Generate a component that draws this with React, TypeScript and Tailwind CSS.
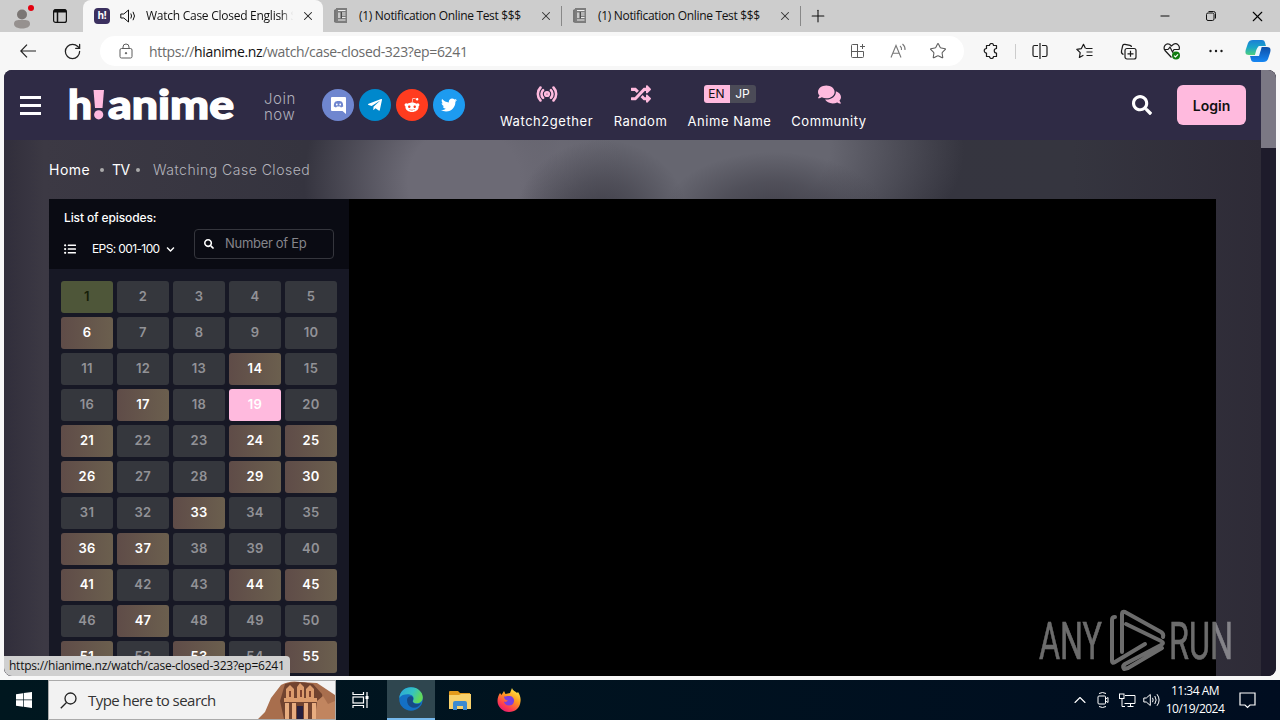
import type { ReactNode } from "react";
import { ChevronUp, Minus, Plus, Radio, RotateCw, Star, Volume2, X } from "lucide-react";
import {
  FaChevronDown,
  FaComments,
  FaListUl,
  FaRandom,
  FaRedditAlien,
  FaSearch,
  FaTelegramPlane,
  FaTwitter,
} from "react-icons/fa";
import { clsx } from "clsx";

const FILLERS = [6, 14, 17, 21, 24, 25, 26, 29, 30, 33, 36, 37, 41, 44, 45, 47, 51, 53, 55];
const WATCHED = 1;
const CURRENT = 19;
const episodes = Array.from({ length: 55 }, (_, i) => i + 1);

function NewspaperIcon() {
  return (
    <svg width="16" height="18" viewBox="0 0 16 18" className="shrink-0">
      <path d="M1 3l2-1v14l-2-1z" fill="#777" />
      <rect x="3" y="1" width="11" height="15" fill="#7d7d7d" />
      <path d="M5 3.500h7.500M9 6h3.500M9 8h3.500M9 10.500h3.500M5 13h7.500" stroke="#ededed" strokeWidth="1.200" />
      <path d="M5 5.500h2.500v5.500H5z" fill="#c9c9c9" />
      <path d="M8.300 5v6.500" stroke="#333" strokeWidth=".8" />
    </svg>
  );
}

function BackgroundTab() {
  return (
    <div className="flex h-8 w-[239px] items-center pl-[10px]">
      <NewspaperIcon />
      <span className="ml-[10px] w-[172px] whitespace-nowrap text-[12px] tracking-[-0.32px] text-[#111]">
        (1) Notification Online Test $$$
      </span>
      <span className="ml-[9px] flex w-3 justify-center">
        <X size={14} strokeWidth={1.8} className="shrink-0 text-[#333]" />
      </span>
      <span className="ml-[9px] h-5 w-px bg-[#888]" />
    </div>
  );
}

function TabStrip() {
  return (
    <div className="flex h-8 shrink-0 bg-[#cdcdcd]">
      <div className="flex w-[83px] items-center pl-3">
        <svg width="22" height="26" viewBox="0 0 22 26" className="shrink-0">
          <circle cx="10" cy="11.500" r="5" fill="#7b7674" />
          <path d="M2 21c0-4 3-4 8-4s8 0 8 4c0 3-4 4.500-8 4.500S2 24 2 21z" fill="#96918f" />
          <circle cx="19" cy="5" r="3" fill="#e3000f" />
        </svg>
        <svg width="14" height="14" viewBox="0 0 14 14" fill="none" stroke="#111" className="ml-[19px] shrink-0">
          <rect x=".6" y=".6" width="12.800" height="12.800" rx="2" strokeWidth="1.200" />
          <path d="M1 2.800h12M4.500 3v10.500" strokeWidth="1.500" />
          <path d="M1 1.600h12" strokeWidth="2" />
        </svg>
      </div>
      <div className="flex w-[240px] items-center rounded-t-lg bg-[#f7f7f7] pl-[11px]">
        <span className="flex h-4 w-4 shrink-0 items-center justify-center rounded bg-[#3b305f] pb-px text-[10px] font-bold tracking-[-0.3px] text-white">
          h!
        </span>
        <svg width="17" height="14" viewBox="0 0 17 14" fill="none" stroke="#111" className="ml-[10px] shrink-0">
          <path d="M.8 5v4h3l4.700 4V1L3.800 5z" strokeLinejoin="round" />
          <path d="M10.800 4.500q1.500 2.500 0 5M13 2.800q3 4.200 0 8.400" />
        </svg>
        <span className="ml-[9px] w-[147px] overflow-hidden bg-gradient-to-r from-[#111] from-[92%] to-transparent bg-clip-text whitespace-nowrap text-[12px] tracking-[-0.26px] text-transparent">
          Watch Case Closed English S
        </span>
        <X size={14} strokeWidth={1.8} className="ml-[8px] shrink-0 text-[#222]" />
      </div>
      <BackgroundTab />
      <BackgroundTab />
      <Plus size={20} strokeWidth={1.3} className="ml-[7px] self-center text-[#111]" />
      <div className="ml-auto flex">
        <span className="flex w-[46px] items-center justify-center">
          <Minus size={14} strokeWidth={1.6} />
        </span>
        <span className="flex w-[46px] items-center justify-center">
          <svg width="10" height="10" viewBox="0 0 10 10" fill="none" stroke="#111">
            <rect x=".5" y="2" width="7.500" height="7.500" rx="1.500" />
            <path d="M2.500.5H7.500q2 0 2 2V7.500" />
          </svg>
        </span>
        <span className="flex w-[46px] items-center justify-center">
          <X size={17} strokeWidth={1.5} />
        </span>
      </div>
    </div>
  );
}

function ToolButton({ children }: { children: ReactNode }) {
  return <span className="flex w-11 items-center justify-center text-[#1b1b1b]">{children}</span>;
}

function CopilotIcon() {
  return (
    <svg width="26" height="24" viewBox="0 0 26 24">
      <defs>
        <linearGradient id="cpA" x1="0" y1="0" x2="0" y2="1">
          <stop offset="0" stopColor="#1b7fd6" />
          <stop offset=".5" stopColor="#1aa5c8" />
          <stop offset="1" stopColor="#4fd07e" />
        </linearGradient>
        <linearGradient id="cpB" x1="0" y1="0" x2="0" y2="1">
          <stop offset="0" stopColor="#0f4fa8" />
          <stop offset="1" stopColor="#1687f3" />
        </linearGradient>
      </defs>
      <path d="M8 1h9c3 0 3 3 4 6h-6c-2 0-3 2-4 5l-1 4H4c-4 0-4-3-3-6l2-6c1-2 2-3 5-3z" fill="url(#cpA)" />
      <path d="M18 23H9c-3 0-3-3-4-6h6c2 0 3-2 4-5l1-4h6c4 0 4 3 3 6l-2 6c-1 2-2 3-5 3z" fill="url(#cpB)" />
      <path d="M14 7h3l-3 10h-4z" fill="#eaf7ff" />
    </svg>
  );
}

function Toolbar() {
  return (
    <div className="flex h-[38px] shrink-0 items-center bg-[#f7f7f7]">
      <svg width="16" height="14" viewBox="0 0 16 14" fill="none" stroke="#222" strokeWidth="1.200" className="ml-5">
        <path d="M7 .7L.8 7 7 13.300M1 7h15" />
      </svg>
      <RotateCw size={19} strokeWidth={1.6} className="ml-[27px] text-[#222]" />
      <div className="ml-[18px] flex h-[30px] w-[864px] items-center rounded-full bg-white pl-[18px] text-[#5d5d5d]">
        <svg width="16" height="16" viewBox="0 0 16 16" fill="none" stroke="currentColor">
          <rect x="2" y="5.500" width="12" height="9.500" rx="1.500" />
          <path d="M5 5.500V4q0-3 3-3t3 3v1.500" />
          <circle cx="8" cy="10.200" r=".7" fill="currentColor" />
        </svg>
        <span className="ml-[15px] whitespace-nowrap text-[14px] tracking-[-0.34px] text-[#6b6b6b]">
          https://<span className="text-[#111]">hianime.nz</span>/watch/case-closed-323?ep=6241
        </span>
        <div className="ml-auto flex w-[126px] items-center">
          <span className="flex w-10 justify-center">
            <svg width="16" height="16" viewBox="0 0 16 16" fill="none" stroke="currentColor">
              <path d="M8 1.500H2.500q-1 0-1 1v11q0 1 1 1h10q1 0 1-1V8.500h-12M7.500 1.500v13M12.500 1v5M10 3.500h5" />
            </svg>
          </span>
          <span className="flex w-10 items-start justify-center text-[#777]">
            <svg width="17" height="16" viewBox="0 0 17 16" fill="none" stroke="currentColor" strokeWidth="1.100">
              <path d="M1 14.500L6 2.500l5 12M3 10.300h6.300M10 3q2 1.500 1.500 4M12.500 1q3 2.500 2.500 6" />
            </svg>
          </span>
          <span className="flex w-10 justify-center">
            <Star size={18} strokeWidth={1.4} />
          </span>
        </div>
      </div>
      <div className="ml-[5px] flex h-9 items-center">
        <ToolButton>
          <svg width="16" height="16" viewBox="0 0 16 16" fill="none" stroke="currentColor" strokeWidth="1.200" strokeLinejoin="round">
            <path d="M3.500 2.500H6.500a2 2 0 0 1 4 0H13.500V5.500a2 2 0 0 0 0 4.500V13.500H10.500a2 2 0 0 1-4 0H3.500V10a2 2 0 0 1 0-4.500z" />
          </svg>
        </ToolButton>
        <span className="mx-[2px] h-[15px] w-px bg-[#ccc]" />
        <ToolButton>
          <svg width="16" height="16" viewBox="0 0 16 16" fill="none" stroke="currentColor" strokeWidth="1.200">
            <path d="M6 2.500H2.500q-1.500 0-1.500 1.500v8q0 1.500 1.500 1.500H6M10 2.500h3.500q1.500 0 1.500 1.500v8q0 1.500-1.500 1.500H10M8 0v16" />
          </svg>
        </ToolButton>
        <ToolButton>
          <svg width="17" height="16" viewBox="0 0 17 16" fill="none" stroke="currentColor" strokeWidth="1.200" strokeLinejoin="round">
            <path d="M9.500 5.500L7.500 1.300 5.400 5.600.8 6.300l3.400 3.300-.8 4.900 4-2.200M10 5.500h6.500M10.500 9h6M10.500 12.500h6" />
          </svg>
        </ToolButton>
        <ToolButton>
          <svg width="17" height="17" viewBox="0 0 17 17" fill="none" stroke="currentColor" strokeWidth="1.200">
            <path d="M3.500 11.500q-2.500-1-2-3.500L2.600 3Q3 1 5 1.400l5 1q1.500.4 1.500 1.600" />
            <rect x="5" y="5.500" width="11" height="10.500" rx="2" />
            <path d="M10.500 7.800v6M7.500 10.800h6" />
          </svg>
        </ToolButton>
        <ToolButton>
          <svg width="18" height="18" viewBox="0 0 18 18" fill="none" stroke="currentColor" strokeWidth="1.200">
            <path d="M8.500 15.500L2 8.500C-.5 5 3 .500 6.500 2.200L8.500 4l2-1.800C14 .5 17.500 4 16 7.500M1 7.500h4L7 5l2.500 5L11 7.500h5.500" />
            <circle cx="13" cy="13.500" r="4" fill="#107c10" stroke="none" />
            <path d="M11 13.600l1.500 1.400 2.500-2.700" stroke="#fff" />
          </svg>
        </ToolButton>
        <ToolButton>
          <svg width="14" height="4" viewBox="0 0 14 4" fill="currentColor">
            <circle cx="1.500" cy="2" r="1.200" />
            <circle cx="7" cy="2" r="1.200" />
            <circle cx="12.500" cy="2" r="1.200" />
          </svg>
        </ToolButton>
        <span className="flex w-[39px] justify-center">
          <CopilotIcon />
        </span>
      </div>
    </div>
  );
}

function DiscordIcon() {
  return (
    <svg width="15" height="17" viewBox="0 0 15 17">
      <path d="M1 0h13q1 0 1 1v16l-3.500-3H1q-1 0-1-1V1q0-1 1-1z" fill="#fff" />
      <path d="M2.800 9.500q0-4 1.700-5l2-.5h2l2 .5q1.700 1 1.700 5L10 10.500l-1-1H6l-1 1z" fill="#6f86cf" />
      <circle cx="5.800" cy="7.500" r=".9" fill="#fff" />
      <circle cx="9.200" cy="7.500" r=".9" fill="#fff" />
    </svg>
  );
}

function SiteLogo() {
  return (
    <svg
      width="170"
      height="44"
      viewBox="0 -4 170 44"
      className="ml-[26px] shrink-0"
      fontFamily="Lato"
      fontWeight="900"
      fontSize="40"
      stroke="#fff"
      strokeWidth="1.400"
    >
      <text x="1" y="32" fill="#fff" textLength="24" lengthAdjust="spacingAndGlyphs">h</text>
      <g fill="#ffbade" stroke="none">
        <path d="M26.500 3h10.500l-1.500 18h-7.500z" />
        <circle cx="31.700" cy="27.800" r="4.600" />
      </g>
      <text x="41" y="32" fill="#fff" textLength="126" lengthAdjust="spacingAndGlyphs">anime</text>
    </svg>
  );
}

const socials = [
  { key: "discord", bg: "bg-[#6f86cf]", icon: <DiscordIcon /> },
  { key: "telegram", bg: "bg-[#0088cc]", icon: <FaTelegramPlane size={16} /> },
  { key: "reddit", bg: "bg-[#ff3c1f]", icon: <FaRedditAlien size={16} /> },
  { key: "twitter", bg: "bg-[#1d9bf0]", icon: <FaTwitter size={16} /> },
];

function NavItem({ label, width, children }: { label: string; width: string; children: ReactNode }) {
  return (
    <div className={clsx("flex shrink-0 flex-col items-center", width)}>
      <div className="flex h-5 items-center text-[#ffbade]">{children}</div>
      <span className="mt-[7px] whitespace-nowrap text-[13px] leading-5 tracking-[0.55px] text-white">{label}</span>
    </div>
  );
}

function SiteHeader() {
  return (
    <header className="flex h-[70px] shrink-0 items-center bg-[#2f2b45] pl-4 font-[Inter,sans-serif]">
      <div className="flex w-[21px] shrink-0 flex-col gap-[5px]">
        <span className="h-[3px] bg-white" />
        <span className="h-[3px] bg-white" />
        <span className="h-[3px] bg-white" />
      </div>
      <SiteLogo />
      <span className="ml-[27px] w-[58px] pt-[3px] text-[15px] leading-4 font-light tracking-[0.5px] text-[#b0afbb]">
        Join
        <br />
        now
      </span>
      <div className="flex gap-[5px]">
        {socials.map((s) => (
          <span key={s.key} className={clsx("flex h-8 w-8 items-center justify-center rounded-full text-white", s.bg)}>
            {s.icon}
          </span>
        ))}
      </div>
      <nav className="ml-[35px] flex gap-5 pt-[5px]">
        <NavItem label="Watch2gether" width="w-[93px]">
          <Radio size={22} strokeWidth={2.8} />
        </NavItem>
        <NavItem label="Random" width="w-[55px]">
          <FaRandom size={20} />
        </NavItem>
        <NavItem label="Anime Name" width="w-[83px]">
          <span className="flex h-[18px] overflow-hidden rounded-[3px] text-[12px] leading-[18px]">
            <span className="w-[26px] bg-[#ffbade] text-center text-[#111]">EN</span>
            <span className="w-[26px] bg-[#4b4b57] text-center text-white">JP</span>
          </span>
        </NavItem>
        <NavItem label="Community" width="w-[76px]">
          <FaComments size={23} />
        </NavItem>
      </nav>
      <FaSearch size={20} className="ml-auto text-white" />
      <span className="mr-[15px] ml-[25px] flex h-10 w-[69px] items-center justify-center rounded-md bg-[#ffbade] pt-px text-[14px] font-semibold text-[#111]">
        Login
      </span>
    </header>
  );
}

function Breadcrumb() {
  return (
    <div className="flex h-[59px] shrink-0 items-center pl-[45px] text-[14px] tracking-[0.5px] whitespace-nowrap text-white">
      <span className="w-[51px]">Home</span>
      <span className="h-1 w-1 rounded-full bg-[#aaa]" />
      <span className="ml-[8px] w-[24px] tracking-[-0.5px]">TV</span>
      <span className="h-1 w-1 rounded-full bg-[#aaa]" />
      <span className="ml-[13px] font-light text-[#b4b4bc]">Watching Case Closed</span>
    </div>
  );
}

function EpisodeCell({ number }: { number: number }) {
  const filler = FILLERS.includes(number);
  return (
    <span
      className={clsx(
        "flex h-8 items-center justify-center rounded-[3px] text-[13px] font-semibold tracking-[0.3px]",
        number === WATCHED && "bg-[#4e5639] text-[#172008]",
        number === CURRENT && "bg-[#ffbade] text-white",
        filler && "bg-gradient-to-r from-[#5f4c48] to-[#6b5f4e] text-white",
        number !== WATCHED && number !== CURRENT && !filler && "bg-[#35373d] text-[#929297]"
      )}
    >
      {number}
    </span>
  );
}

function EpisodeList() {
  return (
    <aside className="flex w-[300px] shrink-0 flex-col overflow-hidden bg-[#171825]">
      <div className="flex h-[70px] shrink-0 justify-between bg-[#0a0b13] pr-[15px] pl-[15px] text-[12px] text-white">
        <div className="pt-[10px]">
          <div className="leading-[18px] font-medium tracking-[-0.12px] whitespace-nowrap">List of episodes:</div>
          <div className="mt-[13px] flex items-center whitespace-nowrap leading-[18px]">
            <FaListUl size={12} />
            <span className="ml-4 w-[68px] tracking-[-0.62px]">EPS: 001-100</span>
            <FaChevronDown size={9} className="ml-[6px]" />
          </div>
        </div>
        <div className="mt-[30px] flex h-[30px] w-[140px] items-center rounded border border-[#35363d] pl-[9px]">
          <FaSearch size={10} />
          <span className="ml-[11px] text-[13px] tracking-[-0.3px] text-[#85858b]">Number of Ep</span>
        </div>
      </div>
      <div className="grid grid-cols-5 gap-1 p-3">
        {episodes.map((n) => (
          <EpisodeCell key={n} number={n} />
        ))}
      </div>
    </aside>
  );
}

function Watermark() {
  return (
    <svg
      width="194"
      height="64"
      viewBox="0 0 194 64"
      className="absolute right-[44px] bottom-[3px] opacity-50"
      fontFamily="Roboto"
      fontSize="51"
      fill="#d8d8d8"
    >
      <g stroke="#d8d8d8" strokeWidth=".6">
        <text x="1" y="50" textLength="63" lengthAdjust="spacingAndGlyphs">ANY</text>
        <text x="131" y="50" textLength="64" lengthAdjust="spacingAndGlyphs">RUN</text>
      </g>
      <g fill="none" stroke="#d8d8d8" strokeWidth="4" strokeLinejoin="round" strokeLinecap="round">
        <path d="M84 43V5q0-3 3-2l36 20q3 2 2 5" />
        <path d="M77 8q-3 0-3 3v41q0 3 3 1l30-18" />
        <path d="M88 15l35 17q4 2 0 4L87 55q-3 2-1 5l4-1 34-20" />
      </g>
    </svg>
  );
}

function SitePage() {
  return (
    <div className="relative mx-1 flex h-[606px] shrink-0 overflow-hidden rounded-lg bg-[#1e1b2b] font-[Inter,sans-serif]">
      <div className="flex w-[1257px] flex-col">
        <SiteHeader />
        <main className="flex min-h-0 flex-1 flex-col bg-[#35343f] bg-[radial-gradient(ellipse_85px_75px_at_598px_75px,#403f49_0%,#403f4999_45%,transparent_100%),radial-gradient(ellipse_110px_60px_at_770px_72px,#42414b_0%,#42414b99_50%,transparent_100%),radial-gradient(ellipse_160px_150px_at_460px_40px,#6c6a75_35%,transparent_100%),radial-gradient(ellipse_270px_150px_at_690px_10px,#666670_50%,transparent_100%),linear-gradient(to_right,#312e3b,#3c3944_40px,#35343f_300px,#35353f_85%,#2e2b37)]">
          <Breadcrumb />
          <div className="mr-[45px] ml-[45px] flex min-h-0 flex-1 bg-black">
            <EpisodeList />
          </div>
        </main>
      </div>
      <div className="w-[15px] bg-[#1e1b2b]">
        <div className="h-[78px] bg-[#7b7884]" />
      </div>
      <Watermark />
      <div className="absolute bottom-0 left-0 h-5 w-[286px] rounded-tr bg-[#d0d0d0] pl-[5px] font-['Open_Sans',sans-serif] text-[12px] leading-5 tracking-[-0.24px] whitespace-nowrap text-[#111]">
        https://hianime.nz/watch/case-closed-323?ep=6241
      </div>
    </div>
  );
}

function EdgeIcon() {
  return (
    <svg width="24" height="24" viewBox="0 0 24 24">
      <defs>
        <linearGradient id="edgeTop" x1="0" y1="0" x2="1" y2=".4">
          <stop offset="0" stopColor="#2aa4dd" />
          <stop offset=".6" stopColor="#35c3c0" />
          <stop offset="1" stopColor="#62d959" />
        </linearGradient>
      </defs>
      <circle cx="12" cy="12" r="11.800" fill="#1470c4" />
      <path d="M.3 11C1 4 6 .2 12 .2c7 0 11.800 5 11.800 10 0 4-3 6-6 6-3.500 0-4.500-1.500-3.500-3 1.500-4-2-6-5.500-6C5 7.200 2 8 .3 11z" fill="url(#edgeTop)" />
      <path d="M8 13c0-3 3-4.500 5-3.500 1.500 1 1.500 2.500.8 4-.8 1.500 1.200 3.500 4.200 3.500 2 0 3-.5 4-1-1.500 4-6 5.500-9 4.500S8 17 8 13z" fill="#164a86" />
    </svg>
  );
}

function FirefoxIcon() {
  return (
    <svg width="24" height="24" viewBox="0 0 24 24">
      <defs>
        <linearGradient id="fox" x1=".8" y1="0" x2=".2" y2="1">
          <stop offset="0" stopColor="#fff04a" />
          <stop offset=".4" stopColor="#ff9a1f" />
          <stop offset=".75" stopColor="#ff3c50" />
          <stop offset="1" stopColor="#e01575" />
        </linearGradient>
      </defs>
      <path d="M3 5l1.500 2L7 3l1.500 3L13 5l2-5c1 3 3 3 5 5l1-1c2 3 3 6 2.500 9.500C23 20 18 24 12 24S.5 19 .5 13C.5 10 1.500 7 3 5z" fill="url(#fox)" />
      <path d="M7 8.500c2 .5 3-1 6-.5s4.500 3 4 5.500c-.5 3-3 4-5 4-3 0-5-2-5-4 1.500 1 3 0 4-1-2 0-4-1.500-4-4z" fill="#7a3fe0" />
    </svg>
  );
}

function SearchArt() {
  return (
    <svg width="77" height="38" viewBox="0 0 77 38" className="ml-auto shrink-0">
      <path d="M0 38l7-7 6-14L23 4Q32-1 42 1l17 1 18 12v24z" fill="#a86e4d" />
      <path d="M27 3Q38-1 55 3l9 10 4 25H26l-4-18z" fill="#71432f" />
      <path d="M59 20l6-5 5 8 7-3v18H57z" fill="#c1855f" />
      <path d="M28 8l4-4 4 4v9h-8zM39 6l3-4 4 4v11h-7zM48 8l4-4 4 4v9h-8zM26 17h33v4H26z" fill="#dc9c6d" />
      <path d="M27 22h4v16h-4zM34 22h4v16h-4zM46 22h4v16h-4zM54 22h4v16h-4z" fill="#e8ad80" />
      <path d="M39 25h6v13h-6z" fill="#25203f" />
      <path d="M31 10h2v6h-2zM42 9h2v7h-2zM51 10h2v6h-2z" fill="#80432f" />
    </svg>
  );
}

function Taskbar() {
  return (
    <footer className="flex h-10 shrink-0 items-center bg-gradient-to-r from-[#00171f] to-[#000d20] text-white">
      <span className="flex w-12 shrink-0 justify-center">
        <svg width="16" height="16" viewBox="0 0 16 16" fill="#fff">
          <path d="M0 2.200l7-1v6.300H0zM7.700 1.100L16 0v7.500H7.700zM0 8.300h7v6.400l-7-1zM7.700 8.300H16V16l-8.300-1.200z" />
        </svg>
      </span>
      <div className="flex h-full w-72 shrink-0 items-center border border-[#aaa] bg-[#f2f2f2] pl-[11px]">
        <svg width="17" height="17" viewBox="0 0 17 17" fill="none" stroke="#222" strokeWidth="1.300">
          <circle cx="10.500" cy="6.500" r="5.500" />
          <path d="M6.500 10.500L.8 16.200" />
        </svg>
        <span className="ml-[11px] text-[15px] tracking-[-0.54px] whitespace-nowrap text-[#333]">Type here to search</span>
        <SearchArt />
      </div>
      <span className="flex w-12 justify-center">
        <svg width="17" height="16" viewBox="0 0 17 16" fill="none" stroke="#fff" strokeWidth="1.200">
          <path d="M1 0v2.500h10.500V0M1 16v-2.500h10.500V16" />
          <rect x="1" y="5" width="10.500" height="6" />
          <path d="M15 0v16" />
          <path d="M15 4v3" strokeWidth="3" />
        </svg>
      </span>
      <span className="ml-[3px] flex h-full w-12 items-center justify-center border-b-2 border-[#76b9ed] bg-[#2f464f]">
        <EdgeIcon />
      </span>
      <span className="flex w-[49px] justify-center">
        <svg width="22" height="19" viewBox="0 0 22 19">
          <path d="M0 1q0-1 1-1h8l2 2h10v3H0z" fill="#e39a1c" />
          <path d="M0 4h10l2-1h10v15H0z" fill="#f8d16c" />
          <path d="M4 19v-7q0-2 2-2h10q2 0 2 2v7h-4v-4H8v4z" fill="#3d8bd0" />
        </svg>
      </span>
      <span className="flex w-[49px] justify-center">
        <FirefoxIcon />
      </span>
      <div className="ml-auto flex items-center">
        <ChevronUp size={20} strokeWidth={1.3} />
        <svg width="14" height="16" viewBox="0 0 14 16" fill="none" stroke="#fff" className="ml-[6px]">
          <rect x="2" y="4" width="7.500" height="8" rx="1" />
          <path d="M9.500 7l2.500-1.500v5L9.500 9M3 1.500Q6.500-.5 10 1.500M3 14.500q3.500 2 7 0" />
        </svg>
        <svg width="17" height="15" viewBox="0 0 17 15" fill="none" stroke="#fff" className="ml-[9px]">
          <path d="M6 2.500h10v8H5.500M8.500 13.500h6M11.500 10.500v3M3 5.500v8h3" />
          <rect x=".5" y="1" width="4.500" height="4.500" />
        </svg>
        <svg width="17" height="14" viewBox="0 0 17 14" fill="none" stroke="#fff" className="ml-[7px]">
          <path d="M.8 5v4h2.500l4 3.500v-11L3.300 5zM9.500 4.800q1.300 2.200 0 4.400M11.800 3q2.700 4 0 8M14 1.200q4.200 5.800 0 11.600" />
        </svg>
        <div className="ml-[6px] flex w-[58px] flex-col items-center text-[12px] leading-[18px] tracking-[-0.52px] whitespace-nowrap">
          <span>11:34 AM</span>
          <span>10/19/2024</span>
        </div>
        <svg width="17" height="17" viewBox="0 0 17 17" fill="none" stroke="#fff" strokeWidth="1.200" className="mr-[24px] ml-[15px]">
          <path d="M1 1h15v12h-5L8.500 15.500 6 13H1z" />
        </svg>
      </div>
    </footer>
  );
}

export default function App() {
  return (
    <div className="flex h-[720px] w-[1280px] flex-col overflow-hidden bg-[#f7f7f7] font-['Open_Sans',sans-serif]">
      <TabStrip />
      <Toolbar />
      <SitePage />
      <div className="h-1 shrink-0 bg-[#f7f7f7]" />
      <Taskbar />
    </div>
  );
}
